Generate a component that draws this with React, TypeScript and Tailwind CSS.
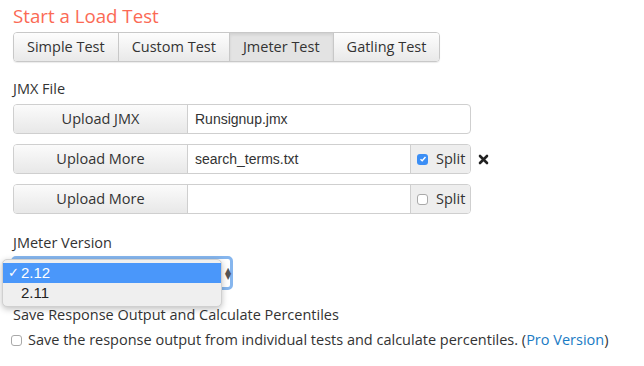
const font = { fontFamily: '"Open Sans", "DejaVu Sans", sans-serif' };

function Tabs() {
  const tabs = ["Simple Test", "Custom Test", "Jmeter Test", "Gatling Test"];
  return (
    <div className="flex h-[30px] w-fit rounded-[4px] border border-[#c8c8c8] overflow-hidden shadow-[0_1px_1px_rgba(0,0,0,0.08)]">
      {tabs.map((t, i) => (
        <div
          key={t}
          className={
            "flex items-center justify-center px-[13px] text-[14.5px] text-[#333] " +
            (i > 0 ? "border-l border-[#c8c8c8] " : "") +
            (t === "Jmeter Test"
              ? "bg-[#e3e3e3] shadow-[inset_0_2px_3px_rgba(0,0,0,0.08)]"
              : "bg-gradient-to-b from-[#fdfdfd] to-[#e9e9e9]")
          }
        >
          {t}
        </div>
      ))}
    </div>
  );
}

function Checkbox({ checked }: { checked?: boolean }) {
  return checked ? (
    <span className="flex h-[11px] w-[11px] items-center justify-center rounded-[3px] bg-[#3b8ef5]">
      <svg width="8" height="8" viewBox="0 0 8 8">
        <path d="M1.5 4.2 L3.2 5.8 L6.5 2" stroke="white" strokeWidth="1.4" fill="none" />
      </svg>
    </span>
  ) : (
    <span className="block h-[11px] w-[11px] rounded-[3px] border border-[#a9a9a9] bg-white" />
  );
}

function UploadRow({
  label,
  value,
  split,
  checked,
  remove,
}: {
  label: string;
  value: string;
  split?: boolean;
  checked?: boolean;
  remove?: boolean;
}) {
  return (
    <div className="flex items-center">
      <div className="flex h-[30px] w-[458px] rounded-[4px] border border-[#cfcfcf]">
        <div className="flex w-[174px] items-center justify-center rounded-l-[3px] border-r border-[#cfcfcf] bg-gradient-to-b from-[#fbfbfb] to-[#e8e8e8] text-[14.5px] text-[#333]">
          {label}
        </div>
        <div className="flex flex-1 items-center px-[7px] text-[14px] text-[#333]" style={{ fontFamily: '"Liberation Sans", Arial, sans-serif' }}>
          {value}
        </div>
        {split && (
          <div className="flex w-[60px] items-center gap-[8px] rounded-r-[3px] border-l border-[#cfcfcf] bg-[#eeeeee] pl-[6px] text-[14.5px] text-[#333]">
            <Checkbox checked={checked} />
            Split
          </div>
        )}
      </div>
      {remove && (
        <svg className="ml-[7px]" width="11" height="11" viewBox="0 0 11 11">
          <path d="M2 2 L9 9 M9 2 L2 9" stroke="#222" strokeWidth="2.6" strokeLinecap="round" />
        </svg>
      )}
    </div>
  );
}

export default function App() {
  return (
    <div className="h-[366px] w-[644px] bg-white pl-[13px] pt-[3px] text-[#333]" style={font}>
      <h2 className="text-[18.7px] leading-[26px] text-[#fb6a55]">Start a Load Test</h2>
      <div className="mt-[3px]">
        <Tabs />
      </div>
      <div className="mt-[17px] text-[14.5px] leading-[20px]">JMX File</div>
      <div className="mt-[5px] flex flex-col gap-[10px]">
        <UploadRow label="Upload JMX" value="Runsignup.jmx" />
        <UploadRow label="Upload More" value="search_terms.txt" split checked remove />
        <UploadRow label="Upload More" value="" split />
      </div>
      <div className="mt-[19px] text-[14.5px] leading-[20px]">JMeter Version</div>
      <div className="relative mt-[3px] h-[34px]">
        <div className="ml-[-2px] h-[34px] w-[222px] rounded-[5px] border-[3px] border-[#86b6ee] bg-white" />
        <div className="absolute left-[212px] top-[11px] text-[8px] leading-[6px] text-[#555]">
          <div>▲</div>
          <div>▼</div>
        </div>
        <div className="absolute left-[-11px] top-[3px] w-[220px] rounded-[5px] border border-[#d0d0d0] bg-[#efefef] py-[3px] shadow-[0_2px_6px_rgba(0,0,0,0.25)]" style={{ fontFamily: '"Liberation Sans", Arial, sans-serif' }}>
          <div className="flex h-[20px] items-center bg-[#4a97fa] pl-[5px] text-[15px] text-white">
            <span className="w-[13px] text-[13px]">✓</span>2.12
          </div>
          <div className="flex h-[20px] items-center pl-[18px] text-[15px] text-[#222]">2.11</div>
        </div>
      </div>
      <div className="mt-[15px] text-[14.5px] leading-[20px]">Save Response Output and Calculate Percentiles</div>
      <div className="ml-[-2px] mt-[5px] flex items-center gap-[6px] text-[14.5px] leading-[20px]">
        <Checkbox />
        <span>
          Save the response output from individual tests and calculate percentiles. (
          <span className="text-[#1a7bc4]">Pro Version</span>)
        </span>
      </div>
    </div>
  );
}
